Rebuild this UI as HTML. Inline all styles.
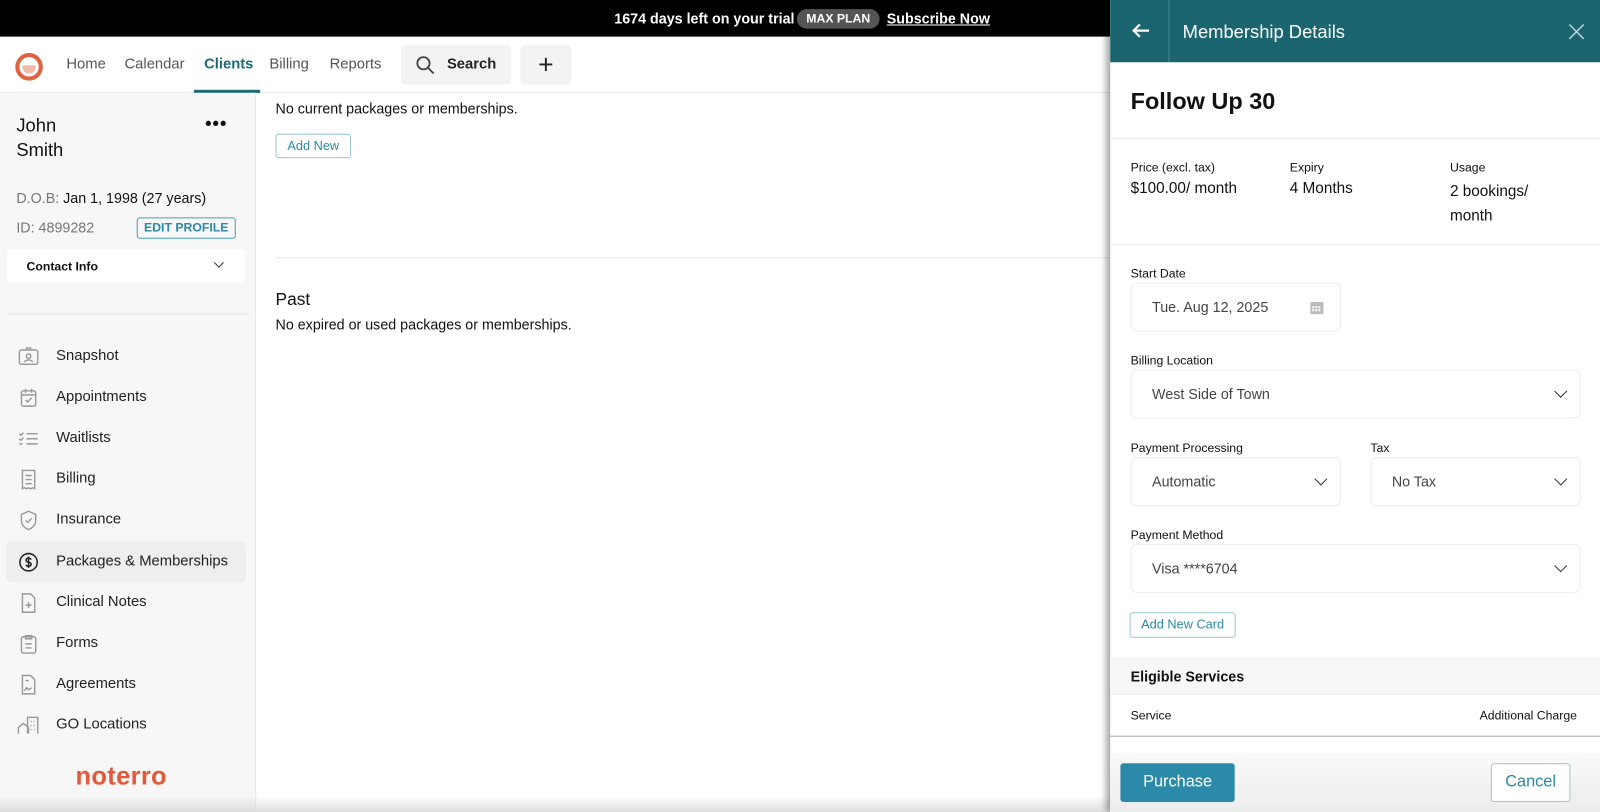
<!DOCTYPE html>
<html><head><meta charset="utf-8"><style>
*{box-sizing:border-box;margin:0;padding:0}
html,body{width:1600px;height:812px;overflow:hidden;background:#fff}
#w{position:absolute;left:0;top:0;width:1568px;height:796px;transform:scale(1.020408);transform-origin:0 0;font-family:"Liberation Sans",sans-serif;color:#111;overflow:hidden}
.abs{position:absolute}
.banner{left:0;top:0;width:1088px;height:36px;background:#000;color:#fff;font-weight:bold;font-size:14px}
.nav{left:0;top:36px;width:1088px;height:55px;background:#fff;border-bottom:1px solid #e6e6e6}
.nav span{position:absolute;top:19px;font-size:14.5px;color:#555}
.side{left:0;top:91px;width:251px;height:705px;background:#f7f7f7;border-right:1px solid #e8e8e8}
.mi{position:absolute;left:55px;font-size:14.5px;color:#222}
.ic{position:absolute;left:17px;width:22px;height:22px}
.panel{left:1088px;top:0;width:480px;height:796px;background:#fff;box-shadow:-4px 0 6px rgba(0,0,0,.35)}
.lbl{position:absolute;font-size:12px;color:#111}
.fld{position:absolute;border:1px solid #ececec;border-radius:6px;background:#fff;font-size:14px;color:#444;padding-left:20px;display:flex;align-items:center}
.chev{position:absolute;right:14px;top:50%;margin-top:-7px;width:9px;height:9px;border-right:1.6px solid #333;border-bottom:1.6px solid #333;transform:rotate(45deg)}
</style></head><body><div id="w">
<div class="abs banner"><div class="abs" style="left:602px;top:10px">1674 days left on your trial</div>
<div class="abs" style="left:781px;top:9px;width:81px;height:19px;border-radius:10px;background:#555;font-size:12px;text-align:center;line-height:19px">MAX PLAN</div>
<div class="abs" style="left:869px;top:10px;text-decoration:underline">Subscribe Now</div></div>
<div class="abs nav">
<div class="abs" style="left:15px;top:16px;width:27px;height:27px;border-radius:50%;border:4px solid #e0623f;background:#fff"><div style="position:absolute;left:3px;top:8px;width:13px;height:8px;border-radius:0 0 8px 8px;background:#f0b9a8"></div></div>
<span style="left:65px">Home</span><span style="left:122px">Calendar</span><span style="left:200px;color:#1b6a78;font-weight:bold">Clients</span><span style="left:264px">Billing</span><span style="left:323px">Reports</span>
<div class="abs" style="left:190px;top:52px;width:65px;height:3px;background:#1b6a78"></div>
<div class="abs" style="left:393px;top:8px;width:108px;height:39px;background:#f3f3f3;border-radius:4px"><svg class="abs" style="left:14px;top:10px" width="20" height="20" viewBox="0 0 20 20" fill="none" stroke="#444" stroke-width="1.8"><circle cx="8" cy="8" r="6"/><path d="M12.5 12.5L18 18"/></svg><span style="left:45px;top:11px;color:#222;font-weight:bold">Search</span></div>
<div class="abs" style="left:510px;top:8px;width:50px;height:39px;background:#f3f3f3;border-radius:4px;font-size:26px;text-align:center;line-height:38px;color:#222">+</div>
</div>
<div class="abs side">
<div class="abs" style="left:16px;top:20px;font-size:18px;line-height:24px">John<br>Smith</div>
<div class="abs" style="left:201px;top:20px;font-size:18px;font-weight:bold;letter-spacing:1px">•••</div>
<div class="abs" style="left:16px;top:95px;font-size:14px;color:#777">D.O.B: <span style="color:#111">Jan 1, 1998 (27 years)</span></div>
<div class="abs" style="left:16px;top:124px;font-size:14px;color:#777">ID: 4899282</div>
<div class="abs" style="left:134px;top:122px;width:97px;height:21px;border:1px solid #4a9fb5;border-radius:3px;color:#2a8aa5;font-size:12px;font-weight:bold;text-align:center;line-height:19px">EDIT PROFILE</div>
<div class="abs" style="left:7px;top:153px;width:233px;height:33px;background:#fff;border-radius:4px"><span style="position:absolute;left:19px;top:10px;font-size:12px;font-weight:bold">Contact Info</span><div class="chev" style="right:22px;margin-top:-7px;width:7px;height:7px"></div></div>
<div class="abs" style="left:7px;top:216px;width:237px;height:1px;background:#e6e6e6"></div>
<div class="abs" style="left:6px;top:439px;width:235px;height:41px;background:#eeeeee;border-radius:6px"></div>
<div class="mi" style="top:250px">Snapshot</div><div class="mi" style="top:290px">Appointments</div><div class="mi" style="top:330px">Waitlists</div><div class="mi" style="top:370px">Billing</div><div class="mi" style="top:410px">Insurance</div><div class="mi" style="top:451px">Packages &amp; Memberships</div><div class="mi" style="top:491px">Clinical Notes</div><div class="mi" style="top:531px">Forms</div><div class="mi" style="top:571px">Agreements</div><div class="mi" style="top:611px">GO Locations</div>
<svg class="ic" style="top:248px" viewBox="0 0 22 22" fill="none" stroke="#999" stroke-width="1.4"><rect x="2" y="4" width="18" height="14" rx="2"/><circle cx="11" cy="10" r="2.2"/><path d="M7 16c1-3 7-3 8 0M9 4V2h4v2"/></svg>
<svg class="ic" style="top:288px" viewBox="0 0 22 22" fill="none" stroke="#999" stroke-width="1.4"><rect x="4" y="4" width="14" height="15" rx="2"/><path d="M4 8h14M8 2v4M14 2v4M8 13l2 2 4-4"/></svg>
<svg class="ic" style="top:328px" viewBox="0 0 22 22" fill="none" stroke="#999" stroke-width="1.4"><path d="M9 6h11M9 11h11M9 16h11M2 6l1.5 1.5L6 5M2 11l1.5 1.5L6 10M2 16h3"/></svg>
<svg class="ic" style="top:368px" viewBox="0 0 22 22" fill="none" stroke="#999" stroke-width="1.4"><path d="M5 2h12v18l-2-1-2 1-2-1-2 1-2-1-2 1z"/><path d="M8 7h6M8 11h6M8 15h6"/></svg>
<svg class="ic" style="top:408px" viewBox="0 0 22 22" fill="none" stroke="#999" stroke-width="1.4"><path d="M11 2l7 3v6c0 5-4 8-7 9-3-1-7-4-7-9V5z"/><path d="M8 11l2 2 4-4"/></svg>
<svg class="ic" style="top:449px" viewBox="0 0 22 22" fill="none" stroke="#222" stroke-width="1.5"><circle cx="11" cy="11" r="8.5"/><path d="M13.5 8.5c-.5-1-1.5-1.5-2.5-1.5-1.5 0-2.5.8-2.5 2s1 1.7 2.5 2 2.5.8 2.5 2-1 2-2.5 2c-1 0-2-.5-2.5-1.5M11 5.5v11"/></svg>
<svg class="ic" style="top:489px" viewBox="0 0 22 22" fill="none" stroke="#999" stroke-width="1.4"><path d="M5 2h8l4 4v14H5z"/><path d="M11 10v6M8 13h6"/></svg>
<svg class="ic" style="top:529px" viewBox="0 0 22 22" fill="none" stroke="#999" stroke-width="1.4"><rect x="4" y="4" width="14" height="16" rx="2"/><path d="M8 3h6v3H8zM8 11h6M8 15h6"/></svg>
<svg class="ic" style="top:569px" viewBox="0 0 22 22" fill="none" stroke="#999" stroke-width="1.4"><path d="M5 2h8l4 4v14H5z"/><path d="M7 17l2-3 2 2 3-2M8 7h3"/></svg>
<svg class="ic" style="top:609px" viewBox="0 0 22 22" fill="none" stroke="#999" stroke-width="1.4"><path d="M1 19v-6l5-4 5 4v6M10 19V3h10v16M13 7h1M16 7h1M13 11h1M16 11h1M13 15h1M16 15h1"/></svg>
<div class="abs" style="left:74px;top:656px;font-size:25px;font-weight:bold;color:#e25a3b;letter-spacing:0.3px">noterro</div>
</div>
<div class="abs" style="left:270px;top:98px;font-size:14px">No current packages or memberships.</div>
<div class="abs" style="left:270px;top:131px;width:74px;height:24px;border:1px solid #9cc6d2;border-radius:3px;color:#2a8aa5;font-size:12.5px;text-align:center;line-height:22px">Add New</div>
<div class="abs" style="left:270px;top:252px;width:818px;height:1px;background:#e6e6e6"></div>
<div class="abs" style="left:270px;top:284px;font-size:17px">Past</div>
<div class="abs" style="left:270px;top:310px;font-size:14px">No expired or used packages or memberships.</div>
<div class="abs" style="left:0;top:780px;width:1088px;height:16px;background:linear-gradient(rgba(255,255,255,0),#dcdcdc)"></div>

<div class="abs panel">
<div class="abs" style="left:0;top:0;width:480px;height:61px;background:#1b6570"></div>
<div class="abs" style="left:57px;top:0;width:1px;height:61px;background:#3d8894"></div>
<svg class="abs" style="left:21px;top:22px" width="18" height="16" viewBox="0 0 18 16" fill="none" stroke="#fff" stroke-width="2.2"><path d="M17 8H2M8 2L2 8l6 6"/></svg>
<div class="abs" style="left:71px;top:21px;font-size:18px;color:#fff">Membership Details</div>
<svg class="abs" style="left:449px;top:23px" width="16" height="16" viewBox="0 0 16 16" stroke="#b9d3d6" stroke-width="1.5"><path d="M1 1l14 14M15 1L1 15"/></svg>
<div class="abs" style="left:20px;top:86px;font-size:23px;font-weight:bold">Follow Up 30</div>
<div class="abs" style="left:0;top:135px;width:480px;height:1px;background:#ececec"></div>
<div class="lbl" style="left:20px;top:157px">Price (excl. tax)</div><div class="lbl" style="left:176px;top:157px">Expiry</div><div class="lbl" style="left:333px;top:157px">Usage</div>
<div class="abs" style="left:20px;top:176px;font-size:15px">$100.00/ month</div><div class="abs" style="left:176px;top:176px;font-size:15px">4 Months</div><div class="abs" style="left:333px;top:176px;font-size:15px;line-height:24px">2 bookings/<br>month</div>
<div class="abs" style="left:0;top:239px;width:480px;height:1px;background:#ececec"></div>
<div class="lbl" style="left:20px;top:261px">Start Date</div>
<div class="fld" style="left:20px;top:277px;width:206px;height:48px">Tue. Aug 12, 2025<svg class="abs" style="right:16px;top:17px" width="13" height="13" viewBox="0 0 13 13" fill="#bbb"><rect x="0" y="1" width="13" height="12" rx="1"/><path d="M2 5h2v2H2zM5 5h2v2H5zM8 5h2v2H8zM2 8h2v2H2zM5 8h2v2H5zM8 8h2v2H8z" fill="#fff"/></svg></div>
<div class="lbl" style="left:20px;top:346px">Billing Location</div>
<div class="fld" style="left:20px;top:362px;width:441px;height:48px">West Side of Town<div class="chev"></div></div>
<div class="lbl" style="left:20px;top:432px">Payment Processing</div><div class="lbl" style="left:255px;top:432px">Tax</div>
<div class="fld" style="left:20px;top:448px;width:206px;height:48px">Automatic<div class="chev"></div></div>
<div class="fld" style="left:255px;top:448px;width:206px;height:48px">No Tax<div class="chev"></div></div>
<div class="lbl" style="left:20px;top:517px">Payment Method</div>
<div class="fld" style="left:20px;top:533px;width:441px;height:48px">Visa ****6704<div class="chev"></div></div>
<div class="abs" style="left:19px;top:600px;width:104px;height:25px;border:1px solid #9cc6d2;border-radius:3px;color:#2a8aa5;font-size:12.5px;text-align:center;line-height:23px">Add New Card</div>
<div class="abs" style="left:0;top:645px;width:480px;height:36px;background:#f7f7f7;border-top:1px solid #eee;border-bottom:1px solid #eee"></div>
<div class="abs" style="left:20px;top:655px;font-size:14px;font-weight:bold">Eligible Services</div>
<div class="lbl" style="left:20px;top:694px">Service</div><div class="lbl" style="left:362px;top:694px">Additional Charge</div>
<div class="abs" style="left:0;top:721px;width:480px;height:1px;background:#aaa"></div>
<div class="abs" style="left:0;top:738px;width:480px;height:58px;background:linear-gradient(#fafafa,#ececec)"></div>
<div class="abs" style="left:10px;top:748px;width:112px;height:38px;background:#2a8aa8;border-radius:3px;color:#fff;font-size:16px;text-align:center;line-height:38px">Purchase</div>
<div class="abs" style="left:373px;top:748px;width:78px;height:38px;border:1px solid #9cc6d2;border-radius:3px;color:#2a8aa5;font-size:16px;text-align:center;line-height:36px;background:#fff">Cancel</div>
</div>
</div></body></html>
